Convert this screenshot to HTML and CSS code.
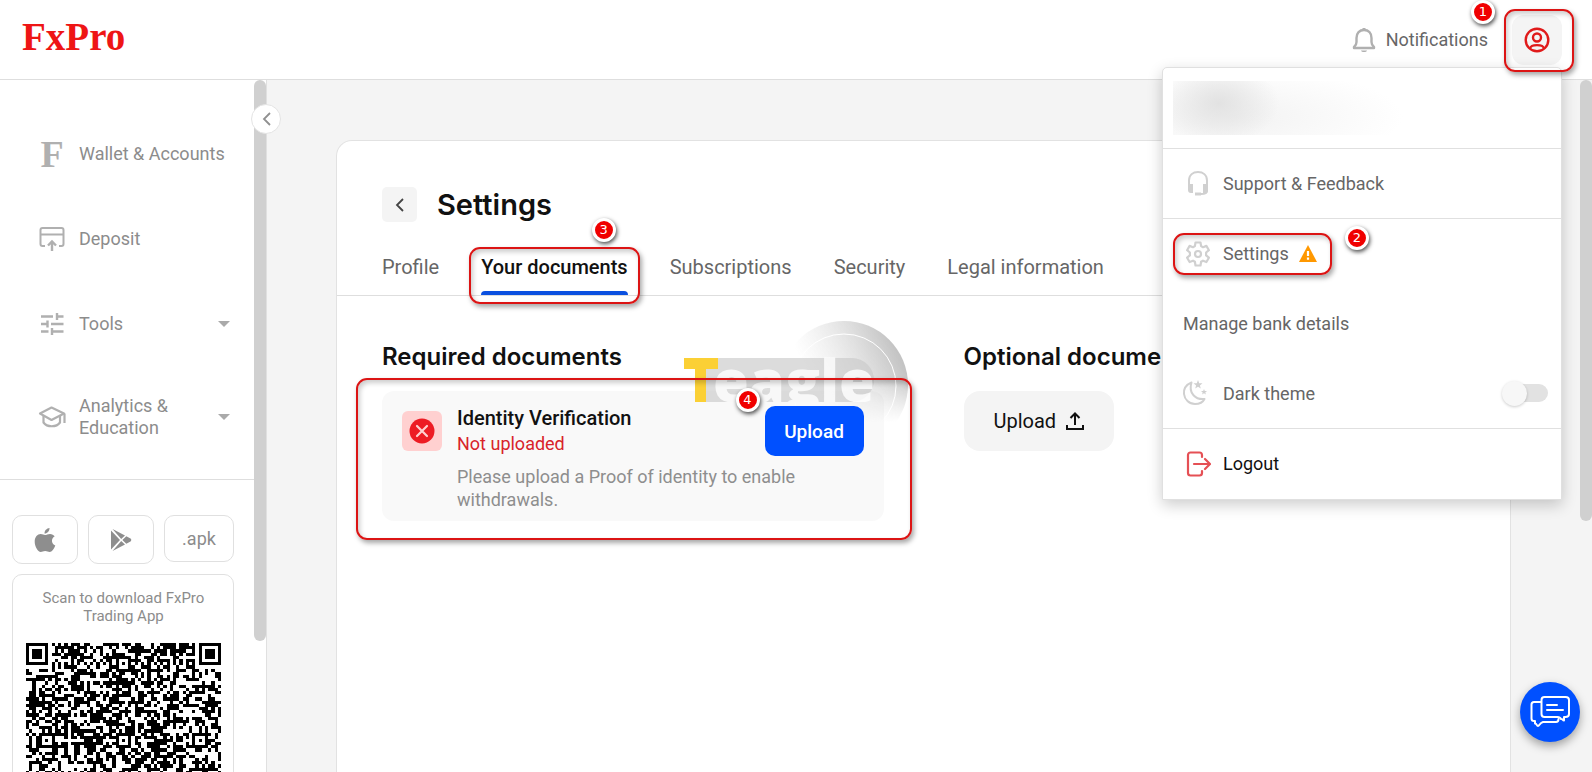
FILE: index.html
```html
<!DOCTYPE html>
<html lang="en">

<head>
    <meta charset="UTF-8">
    <meta name="viewport" content="width=device-width, initial-scale=1.0">
    <title>FxPro - Settings</title>
    <link rel="stylesheet" href="styles.css">
</head>

<body>
    <header class="header">
        <a class="logo" href="#">FxPro</a>
        <div class="header-right">
            <a class="notifications" href="#">
                <svg class="icon-bell" viewBox="0 0 24 26" fill="none" stroke="#b0b0b0" stroke-width="2.400">
                    <path d="M2 21v-1c2-1.500 2.500-3 2.500-5v-4c0-5 3-8 7.500-8s7.500 3 7.500 8v4c0 2 .5 3.500 2.500 5v1z" stroke-linejoin="round" />
                    <path d="M12 1v2" stroke-width="3" />
                    <path d="M9 23.500h6c-.5 2-5.500 2-6 0z" fill="#b0b0b0" stroke="none" />
                </svg>
                <span>Notifications</span>
            </a>
            <div class="profile">
                <button class="profile-button" aria-label="Profile menu">
                    <svg width="26" height="26" viewBox="0 0 26 26" fill="none" stroke="#e01a1a" stroke-width="2.400">
                        <circle cx="13" cy="13" r="11.300" />
                        <circle cx="13" cy="10.500" r="4" />
                        <path d="M6 21.500c1-4.500 13-4.500 14 0" />
                    </svg>
                </button>
                <span class="mark mark-profile"></span>
                <span class="step step-profile">1</span>

                <!-- Profile menu -->
                <div class="menu">
                    <div class="menu-user"><span class="user-name"></span></div>
                    <a class="menu-item line" href="#">
                        <svg class="menu-icon" viewBox="0 0 26 26" fill="none" stroke="#d0d0d0" stroke-width="2">
                            <path d="M4 15v-4.500C4 5 8 2 13 2s9 3 9 8.500V21c0 2-2 3-6 3" />
                            <path d="M3 14h5v9H6c-2 0-3-1-3-3zM23 14h-5v9h2c2 0 3-1 3-3z" fill="#d0d0d0" stroke="none" />
                            <path d="M10 24h6" stroke-width="3" />
                        </svg>
                        <span>Support &amp; Feedback</span>
                    </a>
                    <a class="menu-item" href="#">
                        <svg class="menu-icon" viewBox="0 0 26 26" fill="none" stroke="#d0d0d0" stroke-width="2.200" stroke-linejoin="round">
                            <path d="M10.500 1.500h5l.6 3.600 1.900 1.100 3.400-1.300 2.500 4.300-2.800 2.300v2.900l2.800 2.300-2.500 4.300-3.400-1.300-1.900 1.100-.6 3.700h-5l-.6-3.700L8 19.700 4.600 21l-2.500-4.300 2.800-2.300v-2.900L2.100 9.200l2.500-4.300L8 6.200l1.900-1.100z" />
                            <circle cx="13" cy="13" r="3" />
                        </svg>
                        <span>Settings</span>
                        <svg class="icon-warning" width="18" height="17" viewBox="0 0 18 17">
                            <path d="M9 0l9 17H0z" fill="#ff9800" />
                            <path d="M9 6v5M9 12.500v2.300" stroke="#fff" stroke-width="2.200" />
                        </svg>
                        <span class="mark mark-menu"></span>
                        <span class="step step-menu">2</span>
                    </a>
                    <a class="menu-item no-icon" href="#">Manage bank details</a>
                    <label class="menu-item line theme" for="dark-theme">
                        <svg class="menu-icon" viewBox="0 0 26 26" fill="none" stroke="#d0d0d0" stroke-width="2">
                            <path d="M9.500 2.500C3.500 5 1.500 9 2 14c.6 5.500 5 10 11 10 4.500 0 8-2 9.500-5C14 20 6 13.500 9.500 2.500z" stroke-linejoin="round" />
                            <path d="M16 0l1.200 3.200 3.300.1-2.600 2.100.9 3.200L16 6.700l-2.800 1.900.9-3.200-2.600-2.100 3.300-.1zM22 9l.8 1.900 2.200.1-1.700 1.400.6 2.100-1.900-1.200-1.900 1.200.6-2.100L19 11l2.200-.1z" fill="#d0d0d0" stroke="none" />
                        </svg>
                        <span>Dark theme</span>
                        <input type="checkbox" class="switch" id="dark-theme">
                    </label>
                    <a class="menu-item logout" href="#">
                        <svg class="menu-icon" viewBox="0 0 26 26" fill="none" stroke="#e55055" stroke-width="2.200" stroke-linecap="round" stroke-linejoin="round">
                            <path d="M17 6V4c0-1.500-.8-2.500-2.500-2.500h-9C4 1.500 3 2.500 3 4v18c0 1.500 1 2.500 2.500 2.500h9c1.700 0 2.500-1 2.500-2.500v-2" />
                            <path d="M9 13h16M20 8l5 5-5 5" />
                        </svg>
                        <span>Logout</span>
                    </a>
                </div>
            </div>
        </div>
    </header>

    <div class="layout">
        <aside class="sidebar">
            <nav class="nav">
                <a class="nav-item" href="#">
                    <span class="nav-icon nav-letter">F</span>
                    <span class="nav-text">Wallet &amp; Accounts</span>
                </a>
                <a class="nav-item" href="#">
                    <svg class="nav-icon" viewBox="0 0 28 28" fill="none" stroke="#b0b0b0" stroke-width="2">
                        <path d="M7 21H4.500C3 21 2.500 20.500 2.500 19V5c0-1.500.5-2 2-2h19c1.500 0 2 .5 2 2v14c0 1.500-.5 2-2 2H21M2.500 9.500h23" />
                        <path d="M14 26V17M10 20.500l4-4 4 4" stroke-width="2.400" />
                    </svg>
                    <span class="nav-text">Deposit</span>
                </a>
                <a class="nav-item" href="#">
                    <svg class="nav-icon" viewBox="0 0 28 28" fill="none" stroke="#b0b0b0" stroke-width="2.400">
                        <path d="M3 6.500h12M19 6.500h6.500M19 3v7M3 14h6M9.500 10.500v7M13 14h12.500M3 21.500h7.500M14 18v7M14 21.500h11.500" />
                    </svg>
                    <span class="nav-text">Tools</span>
                    <span class="caret"></span>
                </a>
                <a class="nav-item" href="#">
                    <svg class="nav-icon" viewBox="0 0 28 28" fill="none" stroke="#b0b0b0" stroke-width="2.200" stroke-linejoin="round">
                        <path d="M2 10.500L13.500 4.500 26 10.500 13.500 17z" />
                        <path d="M5.500 13v6.500c3.500 5 13 5 16.500 0V13M26.500 10.500V20" />
                    </svg>
                    <span class="nav-text">Analytics &amp; Education</span>
                    <span class="caret"></span>
                </a>
            </nav>
            <div class="apps">
                <div class="stores">
                    <a class="store" href="#" aria-label="App Store">
                        <svg width="22" height="26" viewBox="0 0 22 26" fill="#8e8e8e">
                            <path d="M15.500 1c.2 2.800-2 5.500-5 5.500C10.300 3.700 12.700 1.300 15.500 1z" />
                            <path d="M11 8c1.400 0 2.800-1.100 5-1.100 2 0 3.700 1 4.700 2.400-4 2.300-3.300 7.700.6 9.300C20 22 18 25 15.700 25c-1.700 0-2.500-1-4.500-1s-2.900 1-4.400 1C3.800 25 .7 19.500.7 14.800c0-4.800 2.800-7.700 6-7.700C8.500 7.100 9.900 8 11 8z" />
                        </svg>
                    </a>
                    <a class="store" href="#" aria-label="Google Play">
                        <svg width="22" height="24" viewBox="0 0 22 24" fill="#8e8e8e">
                            <path d="M1 2.500L10 12 1 21.500zM2.500 1l12.500 6.500-3.800 3.600zM2.500 23l12.500-6.500-3.800-3.600zM16.300 8.200l4.200 2.400c1 .6 1 2.200 0 2.800l-4.200 2.400L12.400 12z" />
                        </svg>
                    </a>
                    <a class="store apk" href="#">.apk</a>
                </div>
                <div class="qr-card">
                    <p class="qr-text">Scan to download FxPro Trading App</p>
                    <svg class="qr" id="qr" viewBox="0 0 61 61" shape-rendering="crispEdges"></svg>
                </div>
            </div>
            <span class="scrollbar side-scroll"></span>
            <button class="collapse" aria-label="Collapse menu">
                <svg width="9" height="14" viewBox="0 0 9 14" fill="none" stroke="#909090" stroke-width="1.800"><path d="M8 1L2 7l6 6" /></svg>
            </button>
        </aside>

        <main class="main">
            <section class="panel">
                <div class="panel-head">
                    <div class="title-row">
                        <button class="back" aria-label="Back">
                            <svg width="9" height="14" viewBox="0 0 9 14" fill="none" stroke="#444" stroke-width="1.800"><path d="M8 1L2 7l6 6" /></svg>
                        </button>
                        <h1>Settings</h1>
                    </div>
                    <nav class="tabs">
                        <a class="tab" href="#">Profile</a>
                        <a class="tab active" href="#">Your documents
                            <span class="mark mark-tab"></span>
                            <span class="step step-tab">3</span>
                        </a>
                        <a class="tab" href="#">Subscriptions</a>
                        <a class="tab" href="#">Security</a>
                        <a class="tab" href="#">Legal information</a>
                    </nav>
                </div>
                <div class="documents">
                    <div class="doc-column">
                        <h2>Required documents</h2>
                        <div class="doc-card">
                            <!-- Watermark -->
                            <svg class="watermark" width="226" height="104" viewBox="0 0 226 104" aria-hidden="true">
                                <defs>
                                    <linearGradient id="disc" x1="0.900" y1="0.200" x2="0.250" y2="0.500">
                                        <stop offset="0" stop-color="#aaa" stop-opacity="0.700" />
                                        <stop offset="1" stop-color="#ccc" stop-opacity="0" />
                                    </linearGradient>
                                    <linearGradient id="fade" x1="0" y1="0" x2="0" y2="1">
                                        <stop offset="0.450" stop-color="#fff" />
                                        <stop offset="0.780" stop-color="#000" />
                                    </linearGradient>
                                    <mask id="disc-mask" maskUnits="userSpaceOnUse" x="90" y="0" width="136" height="130">
                                        <rect x="90" y="0" width="136" height="130" fill="url(#fade)" />
                                    </mask>
                                </defs>
                                <g mask="url(#disc-mask)">
                                    <circle cx="160" cy="64" r="64" fill="url(#disc)" />
                                    <circle cx="160" cy="65" r="52" fill="none" stroke="#fff" />
                                </g>
                                <path d="M22 37h146a22 22 0 0 1 0 44H22z" fill="#c9c9c9" fill-opacity="0.650" />
                                <svg width="226" height="81">
                                    <text class="watermark-text" x="29" y="81">eagle</text>
                                </svg>
                                <path d="M0 37h34v11H22v33H11V48H0z" fill="#fbd035" />
                            </svg>
                            <span class="status-icon">
                                <svg width="26" height="26" viewBox="0 0 26 26">
                                    <circle cx="13" cy="13" r="12.500" fill="#ed1c24" />
                                    <path d="M8 8l10 10M18 8L8 18" stroke="#ffd0d0" stroke-width="2.200" stroke-linecap="round" />
                                </svg>
                            </span>
                            <div class="doc-info">
                                <div class="doc-top">
                                    <div>
                                        <h3>Identity Verification</h3>
                                        <p class="status">Not uploaded</p>
                                    </div>
                                    <button class="upload-primary">Upload</button>
                                </div>
                                <p class="hint">Please upload a Proof of identity to enable withdrawals.</p>
                            </div>
                            <span class="mark mark-card"></span>
                            <span class="step step-card">4</span>
                        </div>
                    </div>
                    <div class="doc-column">
                        <h2>Optional documents</h2>
                        <button class="upload-secondary">Upload
                            <svg width="18" height="18" viewBox="0 0 18 18" fill="none" stroke="#111" stroke-width="2">
                                <path d="M9 13V2M4.500 6L9 1.500 13.500 6M1 13v4h16v-4" />
                            </svg>
                        </button>
                    </div>
                </div>
            </section>
            <span class="scrollbar main-scroll"></span>
        </main>
    </div>

    <button class="chat" aria-label="Open chat">
        <svg width="40" height="32" viewBox="0 0 40 32" fill="none" stroke="#fff" stroke-width="2" stroke-linejoin="round" stroke-linecap="round">
            <path d="M11 6H4C2.500 6 1.500 7 1.500 8.500v14C1.500 24 2.500 25 4 25h1v2.500c2 0 1.500 2.500 3 2.500s1.500-3 5-4h13c1.500 0 2.500-1 2.500-3" />
            <path d="M14.500 1h21C37.500 1 39 2 39 4v14c0 2-1.500 3-3.500 3H34v3.500c-1.500 0-1.500-2-3-1.500-1-1-1-2-3-2H14.500c-2 0-3-1-3-3V4c0-2 1-3 3-3z" />
            <path d="M17 9h10M17 14h16" />
        </svg>
    </button>

    <script src="qr.js"></script>
</body>

</html>
```
FILE: styles.css
```css
* {
    box-sizing: border-box;
}

body {
    font-family: Roboto, Arial, sans-serif;
    font-size: 18px;
    margin: 0;
    height: 100vh;
    display: flex;
    flex-direction: column;
    overflow: hidden;
    background-color: #fff;
    color: #111;
}

a {
    color: inherit;
    text-decoration: none;
}

h1,
h2,
h3,
p {
    margin: 0;
}

button {
    font-family: inherit;
    border: none;
    padding: 0;
    cursor: pointer;
    display: flex;
    align-items: center;
    justify-content: center;
}

/* Header */
.header {
    display: flex;
    align-items: center;
    justify-content: space-between;
    height: 80px;
    padding: 0 30px 0 22px;
    border-bottom: 1px solid #dedede;
}

.logo {
    font-family: "Liberation Serif", serif;
    font-size: 39px;
    font-weight: bold;
    line-height: 40px;
    color: #ee1515;
    padding-bottom: 6px;
}

.header-right {
    display: flex;
    align-items: center;
    gap: 24px;
}

.notifications {
    display: flex;
    align-items: center;
    gap: 10px;
    color: #666;
}

.icon-bell {
    width: 24px;
    height: 26px;
}

.profile {
    position: relative;
}

.profile-button {
    width: 50px;
    height: 50px;
    border-radius: 12px;
    background-color: #f4f4f4;
}

/* Profile menu */
.menu {
    position: absolute;
    top: 52px;
    right: 0;
    z-index: 5;
    width: 400px;
    background-color: #fff;
    border: 1px solid #e0e0e0;
    border-radius: 5px 5px 0 0;
    box-shadow: 0 5px 15px rgba(0, 0, 0, 0.2);
}

.menu-user {
    height: 81px;
    padding: 13px 10px;
    border-bottom: 1px solid #e0e0e0;
}

.user-name {
    display: block;
    width: 230px;
    height: 54px;
    background: radial-gradient(ellipse 60px 42px at 46px 22px, #e2e2e2, transparent),
        radial-gradient(ellipse 170px 50px at 60px 36px, #f2f2f2, transparent);
}

.menu-item {
    position: relative;
    display: flex;
    align-items: center;
    height: 70px;
    padding: 0 13px 0 22px;
    color: #666;
}

.menu-item.line {
    border-bottom: 1px solid #e0e0e0;
}

.menu-item.no-icon {
    padding-left: 20px;
}

.menu-item.logout {
    color: #111;
}

.menu-icon {
    width: 26px;
    height: 26px;
    margin-right: 12px;
}

.menu-item.theme {
    padding-left: 19px;
}

.theme .menu-icon {
    margin-right: 15px;
}

.icon-warning {
    margin-left: 10px;
}

.switch {
    appearance: none;
    position: relative;
    width: 44px;
    height: 18px;
    margin: 0 0 0 auto;
    border-radius: 9px;
    background-color: #e2e2e2;
}

.switch::before {
    content: "";
    position: absolute;
    top: -3px;
    left: -2px;
    width: 25px;
    height: 25px;
    border-radius: 50%;
    background-color: #f7f7f7;
    box-shadow: 0 1px 3px rgba(0, 0, 0, 0.2);
}

/* Sidebar */
.layout {
    display: flex;
    flex: 1;
    min-height: 0;
}

.sidebar {
    position: relative;
    display: flex;
    flex-direction: column;
    width: 267px;
    flex-shrink: 0;
    padding-right: 12px;
    border-right: 1px solid #e0e0e0;
}

.nav {
    padding: 32px 24px 11px 38px;
    border-bottom: 1px solid #dedede;
}

.nav-item {
    display: flex;
    align-items: center;
    gap: 13px;
    padding: 28px 0 29px;
    color: #8c8c8c;
    line-height: 22px;
}

.nav-icon {
    width: 28px;
    height: 28px;
    flex-shrink: 0;
}

.nav-letter {
    font-family: "Liberation Serif", serif;
    font-size: 38px;
    font-weight: bold;
    line-height: 28px;
    text-align: center;
    color: #b0b0b0;
}

.nav-text {
    white-space: nowrap;
}

.nav-item:last-child .nav-text {
    white-space: normal;
    width: 100px;
}

.caret {
    margin-left: auto;
    border: 6px solid transparent;
    border-top-color: #aaa;
    border-bottom: none;
}

.apps {
    flex: 1;
    min-height: 0;
    overflow: hidden;
    padding: 35px 20px 0 12px;
    color: #8c8c8c;
}

.stores {
    display: flex;
    align-items: flex-start;
    gap: 10px;
    margin-bottom: 10px;
}

.store {
    display: flex;
    align-items: center;
    justify-content: center;
    flex: 1;
    height: 49px;
    border: 1px solid #e0e0e0;
    border-radius: 10px;
}

.apk {
    flex: 0 0 70px;
    height: 47px;
}

.qr-card {
    padding: 14px 12px 14px 13px;
    border: 1px solid #e0e0e0;
    border-radius: 10px;
    text-align: center;
}

.qr-text {
    padding: 0 10px;
    margin-bottom: 18px;
    font-size: 15px;
    line-height: 18px;
}

.qr {
    display: block;
    width: 100%;
}

.scrollbar {
    position: absolute;
    right: 0;
    width: 12px;
    border-radius: 6px;
    background-color: #d0d0d0;
}

.side-scroll {
    top: 0;
    height: 561px;
}

.main-scroll {
    top: 0;
    height: 441px;
}

.collapse {
    position: absolute;
    top: 24px;
    right: -15px;
    z-index: 2;
    width: 30px;
    height: 30px;
    border: 1px solid #e4e4e4;
    border-radius: 50%;
    background-color: #fff;
}

/* Main */
.main {
    position: relative;
    flex: 1;
    padding: 60px 81px 0 69px;
    background-color: #f4f4f4;
}

.panel {
    height: 100%;
    background-color: #fff;
    border: 1px solid #e2e2e2;
    border-bottom: none;
    border-radius: 16px 16px 0 0;
}

.panel-head {
    padding: 46px 45px 0;
    border-bottom: 1px solid #dedede;
}

.title-row {
    display: flex;
    align-items: center;
    gap: 20px;
}

.back {
    width: 35px;
    height: 35px;
    border-radius: 5px;
    background-color: #f4f4f4;
}

h1 {
    font-family: Inter, sans-serif;
    font-size: 29px;
    font-weight: 600;
    line-height: 35px;
}

.tabs {
    display: flex;
    gap: 42px;
    margin-top: 29px;
}

.tab {
    position: relative;
    font-size: 20px;
    line-height: 32px;
    padding-bottom: 8px;
    border-bottom: 4px solid transparent;
    color: #666;
}

.tab.active {
    color: #111;
    font-weight: 500;
}

.tab.active::after {
    content: "";
    position: absolute;
    left: 0;
    right: 0;
    bottom: -4px;
    height: 4px;
    border-radius: 4px 4px 0 0;
    background-color: #0b50e0;
}

.documents {
    display: grid;
    grid-template-columns: 1fr 1fr;
    gap: 80px;
    padding: 45px;
}

h2 {
    font-family: Inter, sans-serif;
    font-size: 24px;
    font-weight: 600;
    line-height: 32px;
    margin-bottom: 18px;
}

.doc-card {
    position: relative;
    display: flex;
    gap: 15px;
    padding: 15px 20px 10px;
    border-radius: 12px;
    background-color: #f9f9f9;
}

.status-icon {
    display: flex;
    align-items: center;
    justify-content: center;
    width: 40px;
    height: 40px;
    margin-top: 5px;
    border-radius: 6px;
    background-color: #ffd0d0;
}

.doc-info {
    flex: 1;
}

.doc-top {
    display: flex;
    justify-content: space-between;
}

h3 {
    font-size: 20px;
    font-weight: 500;
    line-height: 24px;
}

.status {
    line-height: 28px;
    color: #d8232a;
}

.hint {
    max-width: 350px;
    margin-top: 7px;
    line-height: 23px;
    color: #8e8e8e;
}

.upload-primary {
    position: relative;
    width: 99px;
    height: 50px;
    border-radius: 10px;
    background-color: #0050ff;
    color: #fff;
    font-size: 19px;
    font-weight: 500;
}

.upload-secondary {
    gap: 10px;
    height: 60px;
    padding: 0 30px;
    border-radius: 16px;
    background-color: #f4f4f4;
    color: #111;
    font-size: 20px;
}

.watermark {
    position: absolute;
    right: -26px;
    top: -70px;
}

.watermark-text {
    font-family: "Open Sans", sans-serif;
    font-size: 58px;
    font-weight: 800;
    fill: #fff;
    fill-opacity: 0.8;
}

/* Numbered steps */
.mark {
    position: absolute;
    z-index: 6;
    border: 2px solid #dc1414;
    border-radius: 11px;
    box-shadow: 2px 3px 5px rgba(0, 0, 0, 0.35), inset 2px 3px 5px rgba(0, 0, 0, 0.2);
    pointer-events: none;
}

.mark-profile {
    inset: -6px -12px -7px -8px;
}

.mark-menu {
    top: 14px;
    left: 10px;
    width: 159px;
    height: 42px;
}

.mark-tab {
    inset: -4px -12px -13px -12px;
}

.mark-card {
    inset: -13px -28px -19px -26px;
}

.step {
    position: absolute;
    z-index: 7;
    width: 24px;
    height: 24px;
    border: 3px solid #fff;
    border-radius: 50%;
    background-color: #f00000;
    box-shadow: 1px 2px 4px rgba(0, 0, 0, 0.7);
    color: #fff;
    font-family: "DejaVu Sans", sans-serif;
    font-size: 13px;
    font-weight: normal;
    line-height: 18px;
    text-align: center;
}

.step-profile {
    top: -15px;
    left: -41px;
}

.step-menu {
    top: 7px;
    left: 182px;
}

.step-tab {
    top: -33px;
    right: 12px;
}

.step-card {
    top: -3px;
    right: 124px;
}

/* Chat button */
.chat {
    position: fixed;
    right: 12px;
    bottom: 30px;
    width: 60px;
    height: 60px;
    border-radius: 50%;
    background-color: #0050ff;
    box-shadow: 0 4px 10px rgba(0, 0, 0, 0.35);
}
```
FILE: qr.js
```js
// Draws the app download code, 61 x 61 modules
const size = 61;
const qr = document.getElementById('qr');

// Ring patterns: centre x, centre y, outer radius
const rings = [[3, 3, 3], [57, 3, 3], [3, 57, 3]];
[6, 30, 54].forEach(x => [6, 30, 54].forEach(y => {
    if (!(x === 6 && y === 6) && !(x === 54 && y === 6) && !(x === 6 && y === 54)) {
        rings.push([x, y, 2]);
    }
}));

let seed = 20231;

function nextBit() {
    seed = (seed * 1103515245 + 12345) % 2147483648;
    return (seed >> 16) % 100 < 52;
}

function isDark(x, y) {
    const bit = nextBit();
    for (const [cx, cy, r] of rings) {
        const d = Math.max(Math.abs(x - cx), Math.abs(y - cy));
        if (d <= r) {
            return r === 3 ? d !== 2 : d !== 1;
        }
        if (r === 3 && d === 4) {
            return false;
        }
    }
    if (x === 6 || y === 6) {
        return (x + y) % 2 === 0;
    }
    return bit;
}

let d = '';
for (let y = 0; y < size; y++) {
    for (let x = 0; x < size; x++) {
        if (isDark(x, y)) {
            d += `M${x} ${y}h1v1h-1z`;
        }
    }
}

const path = document.createElementNS('http://www.w3.org/2000/svg', 'path');
path.setAttribute('d', d);
qr.appendChild(path);
```
